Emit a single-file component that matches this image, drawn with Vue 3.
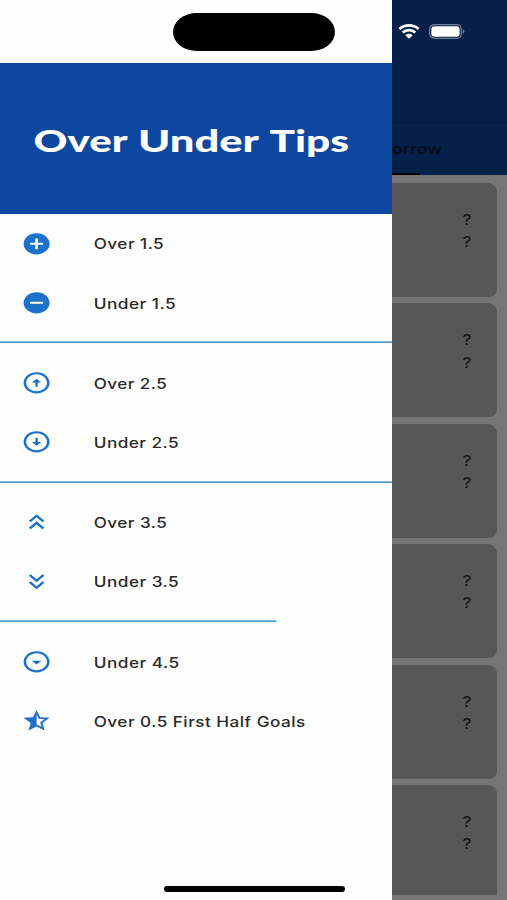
<script setup>
const titleWords = [
  { text: 'Over', x: 1.5, width: 94 },
  { text: 'Under', x: 106, width: 121 },
  { text: 'Tips', x: 237.5, width: 79.5 },
]

const groups = [
  {
    line: 'full',
    items: [
      { label: 'Over 1.5', width: 70.5, icon: 'M12 2C6.48 2 2 6.48 2 12s4.48 10 10 10 10-4.48 10-10S17.52 2 12 2zm5 11h-4v4h-2v-4H7v-2h4V7h2v4h4v2z' },
      { label: 'Under 1.5', width: 82.5, icon: 'M12 2C6.48 2 2 6.48 2 12s4.48 10 10 10 10-4.48 10-10S17.52 2 12 2zm5 11H7v-2h10v2z' },
    ],
  },
  {
    line: 'full',
    items: [
      { label: 'Over 2.5', width: 73.5, icon: 'M12 20c-4.41 0-8-3.59-8-8s3.59-8 8-8 8 3.59 8 8-3.59 8-8 8m0 2c5.52 0 10-4.48 10-10S17.52 2 12 2 2 6.48 2 12s4.48 10 10 10zM11.1 12v3.8h1.8v-4h2.7l-3.6-3.6-3.6 3.6z' },
      { label: 'Under 2.5', width: 85.5, icon: 'M12 4c4.41 0 8 3.59 8 8s-3.59 8-8 8-8-3.59-8-8 3.59-8 8-8m0-2C6.48 2 2 6.48 2 12s4.48 10 10 10 10-4.48 10-10S17.52 2 12 2zM12.9 12V8.2h-1.8v4H8.4l3.6 3.6 3.6-3.6z' },
    ],
  },
  {
    line: 'short',
    items: [
      { label: 'Over 3.5', width: 73.5, icon: 'M6 17.59 7.41 19 12 14.42 16.59 19 18 17.59l-6-6-6 6zM6 11l1.41 1.41L12 7.83l4.59 4.58L18 11l-6-6-6 6z' },
      { label: 'Under 3.5', width: 85.5, icon: 'M18 6.41 16.59 5 12 9.58 7.41 5 6 6.41l6 6 6-6zM18 13l-1.41-1.41L12 16.17l-4.59-4.58L6 13l6 6 6-6z' },
    ],
  },
  {
    line: '',
    items: [
      { label: 'Under 4.5', width: 86, icon: 'M12 4c4.41 0 8 3.59 8 8s-3.59 8-8 8-8-3.59-8-8 3.59-8 8-8m0-2C6.48 2 2 6.48 2 12s4.48 10 10 10 10-4.48 10-10S17.52 2 12 2zM8.2 11h7.6L12 14.6z' },
      { label: 'Over 0.5 First Half Goals', width: 212, icon: 'M22 9.24l-7.19-.62L12 2 9.19 8.63 2 9.24l5.46 4.73L5.82 21 12 17.27 18.18 21l-1.63-7.03L22 9.24zM12 15.4V6.1l1.71 4.04 4.38.38-3.32 2.88 1 4.28L12 15.4z' },
    ],
  },
]
</script>

<template>
  <div class="screen">
    <aside class="drawer">
      <div class="notch-area"><div class="island"></div></div>
      <header class="banner">
        <svg class="banner-title" width="330" height="46">
          <text v-for="w in titleWords" :key="w.text" :x="w.x" y="30" :textLength="w.width" lengthAdjust="spacingAndGlyphs">{{ w.text }}</text>
        </svg>
      </header>
      <nav class="menu">
        <div v-for="(g, i) in groups" :key="i" class="group">
          <div v-for="item in g.items" :key="item.label" class="item">
            <svg class="icon" viewBox="0 0 24 24" preserveAspectRatio="none"><path :d="item.icon" /></svg>
            <svg class="label" width="260" height="24">
              <text x="-0.3" y="17.6" :textLength="item.width" lengthAdjust="spacingAndGlyphs">{{ item.label }}</text>
            </svg>
          </div>
          <svg v-if="g.line" class="divider" :class="g.line"><rect y="9.3" width="100%" height="1.7" /></svg>
        </div>
      </nav>
    </aside>

    <main class="page">
      <div class="appbar">
        <svg class="wifi" viewBox="0 0 22 15" preserveAspectRatio="none">
          <path d="M1.4 5.1C6.8.2 15.2.2 20.6 5.1M4.7 8.5c3.6-3.1 9-3.1 12.6 0" />
          <path class="dot" d="M7.3 11.2c2.2-1.8 5.2-1.8 7.4 0L11 14.8z" />
        </svg>
        <svg class="battery" viewBox="0 0 36 15">
          <rect class="shell" x=".7" y=".7" width="31.6" height="13.6" rx="4.5" />
          <rect class="charge" x="2.4" y="2.3" width="28.2" height="10.4" rx="3" />
          <path class="cap" d="M33.7 5.3q1.7.6 1.7 2.2t-1.7 2.2z" />
        </svg>
      </div>
      <div class="tabs">
        <svg class="tab" width="60" height="24">
          <text x="50" y="17" text-anchor="end" textLength="87" lengthAdjust="spacingAndGlyphs">Tomorrow</text>
        </svg>
        <div class="indicator"></div>
      </div>
      <div class="cards">
        <div v-for="n in 6" :key="n" class="card"><span>?</span><span>?</span></div>
      </div>
    </main>
    <div class="home-bar"></div>
  </div>
</template>

<style>
body { overflow: hidden; }
</style>

<style scoped>
.screen {
  position: relative;
  display: flex;
  width: 507px;
  height: 900px;
  overflow: hidden;
  background: #757575;
  font-family: Inter, "Liberation Sans", sans-serif;
}
.drawer {
  width: 392.4px;
  flex: none;
  background: #fefefe;
}
.notch-area {
  height: 63.4px;
  box-sizing: border-box;
  padding: 12.5px 0 0 173px;
}
.island {
  width: 162px;
  height: 38.5px;
  border-radius: 24px / 19.25px;
  background: #000;
}
.banner {
  height: 150.3px;
  box-sizing: border-box;
  padding: 59px 0 0 32px;
  background: #0e479f;
}
.banner-title { display: block; }
.banner-title text {
  font-family: Lato, sans-serif;
  font-size: 29.5px;
  font-weight: 900;
  fill: #fff;
}
.item {
  display: flex;
  align-items: center;
  height: 59.3px;
  padding-left: 21px;
}
.icon {
  width: 31.2px;
  height: 25.6px;
  margin-right: 41.6px;
  fill: #1c71c9;
}
.label { display: block; }
.label text {
  font-size: 14.3px;
  font-weight: 500;
  letter-spacing: 0.4px;
  fill: #2a2a2a;
}
.divider {
  display: block;
  width: 100%;
  height: 20.8px;
  fill: #4f9cd4;
}
.divider.short { width: 276.5px; }
.page {
  flex: 1;
  display: flex;
  flex-direction: column;
  min-width: 0;
}
.appbar {
  display: flex;
  gap: 9px;
  height: 122px;
  box-sizing: border-box;
  padding: 24px 0 0 6px;
  background: #052149;
}
.wifi { width: 22px; height: 15px; flex: none; }
.wifi path { fill: none; stroke: #fff; stroke-width: 2.7; }
.wifi .dot { fill: #fff; stroke: none; }
.battery { width: 36px; height: 15px; flex: none; }
.shell { fill: none; stroke: #737f94; stroke-width: 1.2; }
.charge { fill: #fff; }
.cap { fill: #737f94; }
.tabs {
  display: flex;
  flex-direction: column;
  justify-content: space-between;
  height: 53px;
  box-sizing: border-box;
  padding-top: 14px;
  border-top: 1px solid #041a3c;
  background: #052149;
}
.tab { display: block; overflow: hidden; }
.tab text {
  font-size: 14px;
  font-weight: 600;
  fill: #020a17;
}
.indicator {
  width: 27.5px;
  height: 2.5px;
  background: #000;
}
.cards {
  display: flex;
  flex-direction: column;
  gap: 6.4px;
  height: 720px;
  box-sizing: border-box;
  padding: 8px 10px 0 0;
  overflow: hidden;
}
.card {
  display: flex;
  flex-direction: column;
  align-items: flex-end;
  flex: none;
  height: 114px;
  box-sizing: border-box;
  padding: 26px 26px 0 0;
  border-radius: 0 9px 8px 0;
  background: #575757;
}
.card:last-child {
  height: 110px;
  border-bottom-right-radius: 0;
}
.card span {
  font-size: 15px;
  line-height: 22.3px;
  font-weight: 500;
  color: #171717;
  transform: scaleX(1.12);
}
.home-bar {
  position: absolute;
  left: 164px;
  top: 886px;
  width: 180.5px;
  height: 6px;
  border-radius: 3px;
  background: #000;
}
</style>
